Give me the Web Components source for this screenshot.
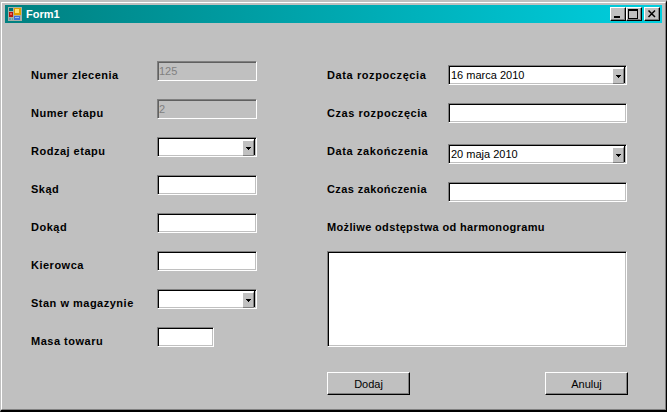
<!DOCTYPE html>
<html>
<head>
<meta charset="utf-8">
<title>Form1</title>
<style>
html, body { margin: 0; background: #c0c0c0; }
body { font: 11px "Liberation Sans", Arial, sans-serif; color: #000; }
</style>
</head>
<body>
<win-form caption="Form1">
  <div slot="left">
    <form-row label="Numer zlecenia"><win-input disabled value="125"></win-input></form-row>
    <form-row label="Numer etapu"><win-input disabled value="2"></win-input></form-row>
    <form-row label="Rodzaj etapu"><win-combo></win-combo></form-row>
    <form-row label="Skąd"><win-input></win-input></form-row>
    <form-row label="Dokąd"><win-input></win-input></form-row>
    <form-row label="Kierowca"><win-input></win-input></form-row>
    <form-row label="Stan w magazynie"><win-combo></win-combo></form-row>
    <form-row label="Masa towaru"><win-input style="width:57px"></win-input></form-row>
  </div>
  <div slot="right">
    <form-row wide label="Data rozpoczęcia" style="letter-spacing:.6px"><win-combo value="16 marca 2010"></win-combo></form-row>
    <form-row wide label="Czas rozpoczęcia" style="margin-top:18px;letter-spacing:.55px"><win-input style="width:179px"></win-input></form-row>
    <form-row wide raised label="Data zakończenia" style="margin-top:21px;letter-spacing:.6px"><win-combo value="20 maja 2010"></win-combo></form-row>
    <form-row wide raised label="Czas zakończenia" style="margin-top:18px;letter-spacing:.4px"><win-input style="width:179px"></win-input></form-row>
    <form-row wide label="Możliwe odstępstwa od harmonogramu" style="margin-top:15px;letter-spacing:.35px"></form-row>
    <win-input style="width:300px;height:96px;margin-top:14px"></win-input>
    <div style="display:flex;justify-content:space-between;width:301px;margin-top:25px">
      <win-button>Dodaj</win-button>
      <win-button>Anuluj</win-button>
    </div>
  </div>
</win-form>
<script>
(function () {
  const formTemplate = document.createElement("template");
  formTemplate.innerHTML = `
<style>
:host {
  display: block;
  width: 667px;
  height: 412px;
  box-sizing: border-box;
  background: #c0c0c0;
  border-style: solid;
  border-width: 2px 1px 2px 1px;
  border-color: #c0c0c0 #000 #000 #c0c0c0;
}
.frame {
  height: 100%;
  box-sizing: border-box;
  border: 1px solid;
  border-color: #fff #808080 #808080 #fff;
  padding: 2px 3px;
}
.title {
  display: flex;
  align-items: center;
  height: 18px;
  padding: 0 2px 0 3px;
  background: linear-gradient(to right, #008080, #00cfdf);
  color: #fff;
  font-weight: bold;
}
.title > svg { margin-right: 4px; flex: none; }
.title span { flex: 1; }
.btn {
  width: 16px;
  height: 14px;
  box-sizing: border-box;
  background: #c0c0c0;
  border: 1px solid;
  border-color: #fff #000 #000 #fff;
  box-shadow: inset -1px -1px 0 #808080;
}
.btn.max { margin-right: 2px; }
.btn svg { display: block; }
.body {
  display: flex;
  padding: 38px 0 0 26px;
}
.left { width: 296px; }
.right { padding-top: 4px; }
</style>
<div class="frame">
  <div class="title">
    <svg width="14" height="14" viewBox="0 0 14 14" shape-rendering="crispEdges">
      <rect width="14" height="14" fill="#a8b0a8"/>
      <rect x="1" y="1" width="4" height="3" fill="#006f78"/>
      <rect x="1" y="5" width="4" height="5" fill="#b81810"/>
      <rect x="2" y="6" width="2" height="2" fill="#f06050"/>
      <rect x="6" y="1" width="7" height="7" fill="#e0a000"/>
      <rect x="7" y="2" width="4" height="4" fill="#ffe070"/>
      <rect x="6" y="9" width="6" height="4" fill="#3c70d8"/>
      <rect x="7" y="10" width="4" height="1" fill="#98bcf8"/>
      <rect x="1" y="11" width="2" height="2" fill="#60a0b0"/>
      <rect x="4" y="11" width="1" height="2" fill="#60a0b0"/>
    </svg>
    <span id="caption"></span>
    <div class="btn"><svg width="14" height="12" shape-rendering="crispEdges"><rect x="3" y="8" width="6" height="2" fill="#000"/></svg></div>
    <div class="btn max"><svg width="14" height="12" shape-rendering="crispEdges"><path d="M1 1h10v10H1z M2 3v7h8V3z" fill="#000" fill-rule="evenodd"/></svg></div>
    <div class="btn"><svg width="14" height="12"><path d="M3.5 2.5l6.5 6.5M10 2.5l-6.5 6.5" stroke="#000" stroke-width="1.5"/></svg></div>
  </div>
  <div class="body">
    <div class="left"><slot name="left"></slot></div>
    <div class="right"><slot name="right"></slot></div>
  </div>
</div>
`;
  class WinForm extends HTMLElement {
    constructor() {
      super();
      this.attachShadow({ mode: "open" });
      this.shadowRoot.appendChild(formTemplate.content.cloneNode(true));
    }
    connectedCallback() {
      this.shadowRoot.querySelector("#caption").textContent = this.getAttribute("caption");
    }
  }

  const rowTemplate = document.createElement("template");
  rowTemplate.innerHTML = `
<style>
:host {
  display: flex;
  align-items: center;
  height: 20px;
  margin-bottom: 18px;
  font-weight: bold;
  letter-spacing: .5px;
}
:host([wide]) { margin-bottom: 0; }
.label { width: 126px; flex: none; padding-top: 7px; }
:host([wide]) .label { width: 121px; padding-top: 0; white-space: nowrap; }
:host([raised]) .label { padding-bottom: 6px; }
</style>
<div class="label"></div>
<slot></slot>
`;
  class FormRow extends HTMLElement {
    constructor() {
      super();
      this.attachShadow({ mode: "open" });
      this.shadowRoot.appendChild(rowTemplate.content.cloneNode(true));
    }
    connectedCallback() {
      this.shadowRoot.querySelector(".label").textContent = this.getAttribute("label");
    }
  }

  const sunken = `
  display: block;
  box-sizing: border-box;
  border: 1px solid;
  border-color: #808080 #fff #fff #808080;
  box-shadow: inset 1px 1px 0 #000, inset -1px -1px 0 #c0c0c0;
  font-weight: normal;
  letter-spacing: 0;
`;

  const inputTemplate = document.createElement("template");
  inputTemplate.innerHTML = `
<style>
:host {${sunken}
  width: 100px;
  height: 20px;
  background: #fff;
  padding: 2px 0 0 1px;
  line-height: 14px;
}
:host([disabled]) { background: #c0c0c0; color: #808080; box-shadow: inset 1px 1px 0 #606060; }
</style>
<span></span>
`;
  class WinInput extends HTMLElement {
    constructor() {
      super();
      this.attachShadow({ mode: "open" });
      this.shadowRoot.appendChild(inputTemplate.content.cloneNode(true));
    }
    connectedCallback() {
      this.shadowRoot.querySelector("span").textContent = this.getAttribute("value") || "";
    }
  }

  const comboTemplate = document.createElement("template");
  comboTemplate.innerHTML = `
<style>
:host {${sunken}
  width: 100px;
  height: 20px;
  background: #fff;
  padding: 1px 2px 0 1px;
  line-height: 16px;
  box-shadow: inset 1px 1px 0 #000, inset -1px -1px 0 #c0c0c0, inset -2px 0 0 #000;
}
:host-context(form-row[wide]) { width: 179px; }
.wrap { display: flex; justify-content: space-between; height: 16px; }
.text { padding-left: 1px; }
.arrow {
  width: 12px;
  height: 16px;
  box-sizing: border-box;
  margin-top: 1px;
  background: #c0c0c0;
  border: 1px solid;
  border-color: #fff #808080 #808080 #fff;
  display: flex;
  align-items: center;
  justify-content: center;
}
.arrow svg { display: block; }
</style>
<div class="wrap">
  <span class="text"></span>
  <div class="arrow"><svg width="5" height="3" shape-rendering="crispEdges"><path d="M0 0h5v1H4v1H3v1H2V2H1V1H0z" fill="#000"/></svg></div>
</div>
`;
  class WinCombo extends HTMLElement {
    constructor() {
      super();
      this.attachShadow({ mode: "open" });
      this.shadowRoot.appendChild(comboTemplate.content.cloneNode(true));
    }
    connectedCallback() {
      this.shadowRoot.querySelector(".text").textContent = this.getAttribute("value") || "";
    }
  }

  const buttonTemplate = document.createElement("template");
  buttonTemplate.innerHTML = `
<style>
:host {
  display: flex;
  align-items: center;
  justify-content: center;
  width: 83px;
  height: 23px;
  box-sizing: border-box;
  background: #c0c0c0;
  border: 1px solid;
  border-color: #fff #000 #000 #fff;
  box-shadow: inset -1px -1px 0 #808080;
}
</style>
<slot></slot>
`;
  class WinButton extends HTMLElement {
    constructor() {
      super();
      this.attachShadow({ mode: "open" });
      this.shadowRoot.appendChild(buttonTemplate.content.cloneNode(true));
    }
  }

  window.customElements.define("win-form", WinForm);
  window.customElements.define("form-row", FormRow);
  window.customElements.define("win-input", WinInput);
  window.customElements.define("win-combo", WinCombo);
  window.customElements.define("win-button", WinButton);
})();
</script>
</body>
</html>
